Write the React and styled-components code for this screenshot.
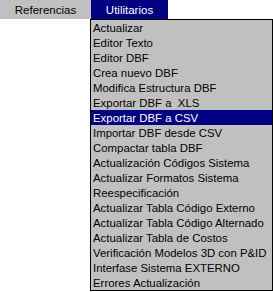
import React from 'react';
import styled, { createGlobalStyle } from 'styled-components';

const GlobalStyle = createGlobalStyle`
  body {
    margin: 0;
    background: #ffffff;
    font-family: "Liberation Sans", Arial, sans-serif;
  }
`;

const Page = styled.div`
  width: 273px;
  height: 292px;
  overflow: hidden;
`;

const MenuBar = styled.div`
  display: flex;
  height: 19px;
`;

const Tab = styled.div`
  width: ${(p) => p.width}px;
  height: 19px;
  display: flex;
  align-items: center;
  justify-content: center;
  font-size: 11.5px;
  padding-top: 1px;
  box-sizing: border-box;
  background: ${(p) => (p.active ? '#000080' : '#c0c0c0')};
  color: ${(p) => (p.active ? '#ffffff' : '#000000')};
`;

const Dropdown = styled.div`
  margin-left: 90px;
  width: 181px;
  border: 1px solid #000000;
  background: #c0c0c0;
  display: flex;
  flex-direction: column;
`;

const Item = styled.div`
  height: 15px;
  line-height: 17px;
  padding-left: 2px;
  font-size: 11.4px;
  white-space: pre;
  background: ${(p) => (p.selected ? '#000080' : 'transparent')};
  color: ${(p) => (p.selected ? '#ffffff' : '#000000')};
`;

const items = [
  'Actualizar',
  'Editor Texto',
  'Editor DBF',
  'Crea nuevo DBF',
  'Modifica Estructura DBF',
  'Exportar DBF a  XLS',
  'Exportar DBF a CSV',
  'Importar DBF desde CSV',
  'Compactar tabla DBF',
  'Actualización Códigos Sistema',
  'Actualizar Formatos Sistema',
  'Reespecificación',
  'Actualizar Tabla Código Externo',
  'Actualizar Tabla Código Alternado',
  'Actualizar Tabla de Costos',
  'Verificación Modelos 3D con P&ID',
  'Interfase Sistema EXTERNO',
  'Errores Actualización',
];

export default function App() {
  return (
    <Page>
      <GlobalStyle />
      <MenuBar>
        <Tab width={91}>Referencias</Tab>
        <Tab width={77} active>Utilitarios</Tab>
      </MenuBar>
      <Dropdown>
        {items.map((label, i) => (
          <Item key={i} selected={i === 6}>{label}</Item>
        ))}
      </Dropdown>
    </Page>
  );
}
